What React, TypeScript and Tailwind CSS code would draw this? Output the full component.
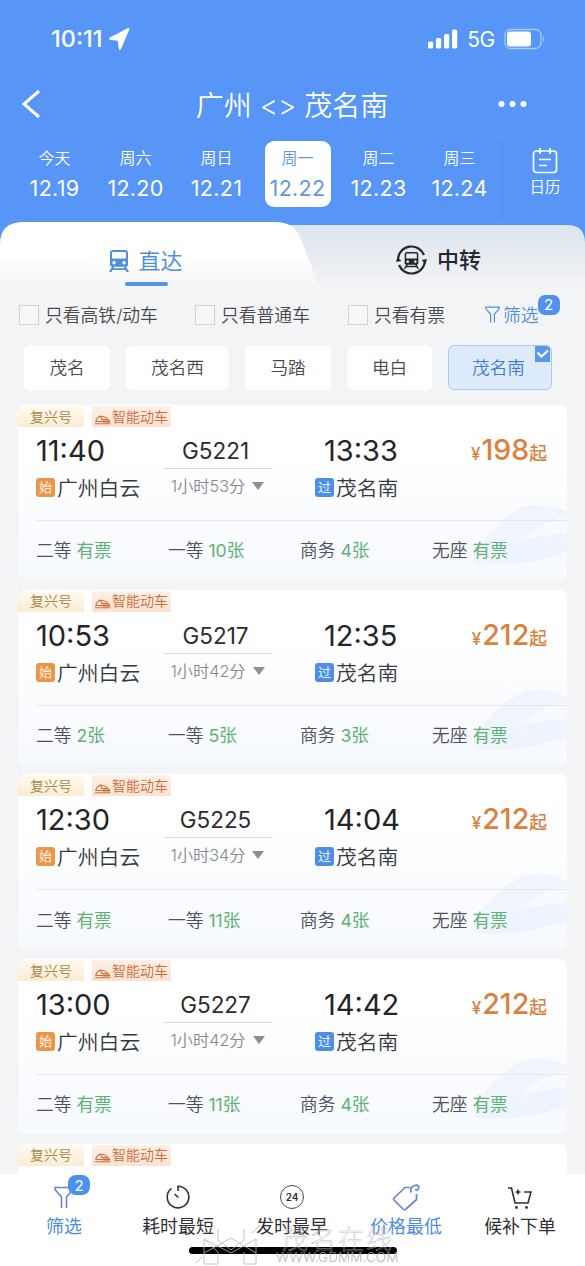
import { ReactNode } from 'react';

const days = [
  { week: '今天', date: '12.19' },
  { week: '周六', date: '12.20' },
  { week: '周日', date: '12.21' },
  { week: '周一', date: '12.22', active: true },
  { week: '周二', date: '12.23' },
  { week: '周三', date: '12.24' },
];

const stations = [
  { name: '茂名', width: 'w-[86px]' },
  { name: '茂名西', width: 'w-[103px]' },
  { name: '马踏', width: 'w-[86px]' },
  { name: '电白', width: 'w-[85px]' },
];

const trains = [
  { no: 'G5221', from: '11:40', to: '13:33', duration: '1小时53分', price: 198, seats: ['有票', '10张', '4张', '有票'] },
  { no: 'G5217', from: '10:53', to: '12:35', duration: '1小时42分', price: 212, seats: ['2张', '5张', '3张', '有票'] },
  { no: 'G5225', from: '12:30', to: '14:04', duration: '1小时34分', price: 212, seats: ['有票', '11张', '4张', '有票'] },
  { no: 'G5227', from: '13:00', to: '14:42', duration: '1小时42分', price: 212, seats: ['有票', '11张', '4张', '有票'] },
];

const seatNames = ['二等', '一等', '商务', '无座'];

function StatusBar() {
  return (
    <div className="flex h-[78px] items-center pl-[51px] pr-[40px] text-white">
      <span className="text-[23.500px] font-medium leading-none">10:11</span>
      <svg className="ml-[6px]" width="21" height="22" viewBox="0 0 21 22" fill="currentColor">
        <path d="M20.300 1.500 12 21c-.5 1.200-2 1-2.200-.3L8.800 12.800.900 11.800C-.200 11.500-.200 10 .800 9.500L18.500.200c1.300-.6 2.300.1 1.800 1.300Z" />
      </svg>
      <svg className="ml-auto" width="30" height="20" viewBox="0 0 30 20" fill="currentColor">
        <rect x="0" y="12.500" width="5.200" height="7" rx="1.500" />
        <rect x="8" y="9" width="5.200" height="10.500" rx="1.500" />
        <rect x="16" y="5" width="5.200" height="14.500" rx="1.500" />
        <rect x="24" y="0.500" width="5.200" height="19" rx="1.500" />
      </svg>
      <span className="ml-[9px] text-[21px] leading-none tracking-[-0.3px]">5G</span>
      <svg className="ml-[9px]" width="41" height="22" viewBox="0 0 41 22">
        <rect x="1" y="1.500" width="36" height="19" rx="5.500" fill="none" stroke="#a9c9fa" strokeWidth="1.300" />
        <rect x="3" y="3.500" width="24" height="15" rx="3" fill="#fff" />
        <path d="M38.800 8v6c2-.8 2-5.200 0-6Z" fill="#a9c9fa" />
      </svg>
    </div>
  );
}

function TitleBar() {
  return (
    <div className="grid h-[52px] grid-cols-[100px_1fr_100px] items-center text-white">
      <svg className="ml-[21px]" width="20" height="30" viewBox="0 0 20 30" fill="none" stroke="currentColor" strokeWidth="3">
        <path d="M18 2 3 15 18 28" />
      </svg>
      <h1 className="mt-[3px] whitespace-nowrap pr-[1px] text-center text-[28px] font-[350] leading-none">广州 &lt;&gt; 茂名南</h1>
      <svg className="ml-[12px]" width="32" height="8" viewBox="0 0 32 8" fill="currentColor">
        <circle cx="4.500" cy="4" r="3" />
        <circle cx="15.500" cy="4" r="3" />
        <circle cx="26.500" cy="4" r="3" />
      </svg>
    </div>
  );
}

function DateStrip() {
  return (
    <div className="flex h-[92px] pl-[14px] pt-[11px] text-white">
      {days.map((d) => (
        <div key={d.date} className="flex w-[81px] justify-center">
          <div
            className={`flex h-[66px] w-[66px] flex-col items-center rounded-[9px] ${
              d.active ? 'bg-white text-[#5f97dd]' : ''
            }`}
          >
            <span className="mt-[7px] text-[16px] font-[350] leading-[20px]">{d.week}</span>
            <span className="mt-[9px] text-[21.500px] leading-[22px] tracking-[0.3px]">{d.date}</span>
          </div>
        </div>
      ))}
      <div className="flex h-[77px] flex-1 flex-col items-center bg-[linear-gradient(90deg,#5792ee,#5795f7_8px)] pl-[5px]">
        <svg className="mt-[7px]" width="26" height="26" viewBox="0 0 26 26" fill="none" stroke="currentColor" strokeWidth="1.700">
          <rect x="1.500" y="3" width="23" height="21.500" rx="3" />
          <path d="M8 0v6M18 0v6M7 11.500h12M7 17.500h8" />
        </svg>
        <span className="mt-[4px] text-[15.500px] font-[350] leading-[20px]">日历</span>
      </div>
    </div>
  );
}

function TrainFront() {
  return (
    <path
      fillRule="evenodd"
      d="M4 0h12q3 0 3 3v12q0 1.500-1.500 1.500h-.6L20 22h-2.500l-.9-2H3.400l-.9 2H0l3.100-5.500h-.6Q1 16.500 1 15V3q0-3 3-3Zm.3 2Q3 2 3 3.300V8.500h14V3.300Q17 2 15.700 2ZM5 11a1.700 1.700 0 1 0 .1 0Zm10 0a1.700 1.700 0 1 0 .1 0ZM5.200 16.700l-.8 1.500h11.200l-.8-1.500Z"
    />
  );
}

function Tabs() {
  return (
    <div className="relative z-0 flex h-[66px]">
      <svg className="absolute inset-0 -z-10" width="585" height="66" viewBox="0 0 585 66">
        <defs>
          <linearGradient id="tabOn" x1="0" y1="0" x2="0" y2="1">
            <stop offset="0.550" stopColor="#fff" />
            <stop offset="1" stopColor="#f4f4f5" />
          </linearGradient>
          <linearGradient id="tabOff" x1="0" y1="0" x2="0" y2="1">
            <stop offset="0" stopColor="#dce5ee" />
            <stop offset="1" stopColor="#f3f3f5" />
          </linearGradient>
        </defs>
        <path d="M250 3h317q18 0 18 18v45H250Z" fill="url(#tabOff)" />
        <path d="M0 66V22Q0 0 24 0H275q19 0 25 15l20 51Z" fill="url(#tabOn)" />
      </svg>
      <div className="flex w-[292px] flex-col items-center">
        <div className="mt-[24px] flex items-center text-[#508fe0]">
          <svg width="20" height="22" viewBox="0 0 20 22" fill="currentColor">
            <TrainFront />
          </svg>
          <span className="ml-[9px] mt-px text-[22px] leading-[28px]">直达</span>
        </div>
        <div className="mt-[7px] h-[4px] w-[43px] rounded-full bg-[#5296e3]" />
      </div>
      <div className="flex flex-1 items-start justify-center pt-[23px] text-[#26282d]">
        <svg width="31" height="31" viewBox="0 0 31 31">
          <path d="M2 14A13.500 13.500 0 0 1 28 10M29 16A13.500 13.500 0 0 1 3 20" fill="none" stroke="currentColor" strokeWidth="2.200" />
          <path d="m0 17 1.500-5 4 4Zm31-3-1.500 5-4-4Z" fill="currentColor" />
          <g transform="translate(7.900 7) scale(.76)" fill="currentColor">
            <TrainFront />
          </g>
        </svg>
        <span className="ml-[10px] mt-px text-[22px] font-medium leading-[28px]">中转</span>
      </div>
    </div>
  );
}

function FunnelIcon({ className, size }: { className?: string; size: number }) {
  return (
    <svg className={className} width={size} height={size * 1.15} viewBox="0 0 20 23" fill="none" stroke="currentColor" strokeWidth="1.600">
      <path d="M7.500 22V11L1 3.500V1.500h18v2L12.500 11v11" />
    </svg>
  );
}

function CheckFilter({ label, className }: { label: string; className: string }) {
  return (
    <div className={`flex items-center ${className}`}>
      <span className="h-[20px] w-[20px] border border-[#d2d3d4] bg-[#f7f7f7]" />
      <span className="ml-[6px] mt-px whitespace-nowrap text-[17.800px] font-[350] leading-none">{label}</span>
    </div>
  );
}

function Filters() {
  return (
    <div className="flex h-[54px] items-center pl-[19px] text-[#48494b]">
      <CheckFilter label="只看高铁/动车" className="w-[176px]" />
      <CheckFilter label="只看普通车" className="w-[153px]" />
      <CheckFilter label="只看有票" className="w-[137px]" />
      <div className="relative flex items-center text-[#538edb]">
        <FunnelIcon size={15} />
        <span className="ml-[3px] mt-px text-[17.800px] font-[350] leading-none">筛选</span>
        <span className="absolute -right-[21px] -top-[11px] flex h-[20px] w-[22px] items-center justify-center rounded-[7px] bg-[#4f92ed] text-[15px] leading-none text-white">
          2
        </span>
      </div>
    </div>
  );
}

function Stations() {
  return (
    <div className="flex h-[63px] gap-[16px] pl-[24px] pt-[4px] text-[17.600px] font-[350] text-[#48494b]">
      {stations.map((s) => (
        <div key={s.name} className={`flex h-[44px] items-center justify-center rounded-[5px] bg-white pt-px ${s.width}`}>
          {s.name}
        </div>
      ))}
      <div className="relative -mt-px flex h-[45px] w-[104px] items-center justify-center overflow-hidden rounded-[6px] border border-[#aacbf3] bg-[#deebfc] pr-[3px] pt-[2px] text-[#3f7dd0]">
        茂名南
        <span className="absolute right-px top-0 flex h-[16px] w-[15px] items-center justify-center bg-[#5d98e8]">
          <svg width="13" height="10" viewBox="0 0 13 10" fill="none" stroke="#fff" strokeWidth="2">
            <path d="m1.500 3.500 4 4L12 1.500" />
          </svg>
        </span>
      </div>
    </div>
  );
}

function CardTags() {
  return (
    <div className="flex h-[22px] items-end gap-[8px] text-[14px] font-[350] leading-none">
      <span className="flex h-[21px] w-[66px] items-center justify-center rounded-tl-[8px] bg-[linear-gradient(180deg,#fffaf1,#faecd1)] text-[#a58548]">
        复兴号
      </span>
      <span className="flex h-[21px] w-[79px] items-center justify-center bg-[linear-gradient(180deg,#fdf0e9,#fbe2d2)] text-[#cb6c36]">
        <svg className="mt-[6px]" width="16" height="10" viewBox="0 0 16 10" fill="none" stroke="currentColor" strokeWidth="1.100">
          <path d="M5.500 1C3 2 1 4.500 .8 6.500H8M5.500 1c3 .2 6.500 2 9 5M5.500 1l1.300 3.500h5M0 8.800h15.500" />
          <path d="M8 6.500h7" strokeWidth="2" />
        </svg>
        <span className="ml-px">智能动车</span>
      </span>
    </div>
  );
}

function StationTag({ children, className }: { children: ReactNode; className: string }) {
  return (
    <span className={`-mt-[3px] mr-[2px] flex h-[19px] w-[19px] items-center justify-center rounded-[3px] text-[13px] leading-none text-white ${className}`}>
      {children}
    </span>
  );
}

function TrainCard({ train }: { train: (typeof trains)[number] }) {
  return (
    <div className="relative z-0 h-[175px] shrink-0 overflow-hidden rounded-[8px] bg-[linear-gradient(180deg,#fff_25%,#f6f9fe)]">
      {/* Bullet train watermark */}
      <svg className="absolute bottom-[13px] right-0 -z-10" width="93" height="64" viewBox="0 0 93 64">
        <path d="M0 50C18 25 34 9 52 3q20-4 41 6v39C68 58 35 64 2 61Z" fill="#eff4fd" />
        <path d="M48 36c10-10 24-18 45-22v17q-22 2-45 5Z" fill="#f7faff" />
        <path d="M12 61C40 44 62 32 93 31v17C68 58 42 63 12 61Z" fill="#edf4fd" />
      </svg>
      <CardTags />
      <div className="grid h-[93px] grid-cols-[140px_119px_144px_1fr] pl-[18px]">
        <div>
          <div className="mt-[6px] text-[29px] leading-[36px] text-[#242528]">{train.from}</div>
          <div className="mt-[5px] flex items-center whitespace-nowrap text-[20.800px] font-[350] leading-[30px] text-[#36383b]">
            <StationTag className="bg-[#eb9545]">始</StationTag>
            广州白云
          </div>
        </div>
        <div className="-ml-[12px] mt-[9px] flex w-[108px] flex-col items-center">
          <div className="h-[32px] pr-[5px] text-[22.500px] leading-[29px] text-[#2b2c2f]">{train.no}</div>
          <div className="h-px w-full bg-[#d8d9dd]" />
          <div className="flex h-[34px] items-center whitespace-nowrap pr-px text-[16.200px] font-[350] leading-none text-[#85878c]">
            {train.duration}
            <svg className="ml-[7px]" width="12" height="8" viewBox="0 0 12 8">
              <path d="M0 0h12L6 8Z" fill="#8b8e93" />
            </svg>
          </div>
        </div>
        <div className="pl-[20px]">
          <div className="ml-[9px] mt-[6px] text-[29px] leading-[36px] text-[#242528]">{train.to}</div>
          <div className="mt-[5px] flex items-center whitespace-nowrap text-[20.800px] font-[350] leading-[30px] text-[#36383b]">
            <StationTag className="bg-[#4d8fe8]">过</StationTag>
            茂名南
          </div>
        </div>
        <div className="mt-[5px] flex h-[34px] items-baseline justify-end pr-[20px] text-[17.800px] font-medium leading-[36px] text-[#da8140]">
          <span className="text-[17px]">¥</span>
          <span className="ml-px text-[28.500px]">{train.price}</span>
          <span>起</span>
        </div>
      </div>
      <div className="ml-[18px] h-px bg-[#e5e9ef]" />
      <div className="flex h-[59px] items-center pl-[18px] pt-px text-[17.700px] font-[350] leading-none text-[#4c5060]">
        {seatNames.map((name, i) => (
          <div key={name} className="w-[132px] shrink-0 whitespace-nowrap">
            {name} <span className="font-normal text-[#5db373]">{train.seats[i]}</span>
          </div>
        ))}
      </div>
    </div>
  );
}

function SortItem({ icon, label, active }: { icon: ReactNode; label: string; active?: boolean }) {
  return (
    <div className={`flex w-[114px] shrink-0 flex-col items-center ${active ? 'text-[#4f8ddb]' : 'text-[#303133]'}`}>
      <div className="relative mt-[8px] flex h-[30px] items-center justify-center">{icon}</div>
      <span className="mt-px whitespace-nowrap text-[17.900px] leading-[28px]">{label}</span>
    </div>
  );
}

function BottomBar() {
  return (
    <div className="relative flex h-[92px] bg-white pl-[7px]">
      <SortItem
        active
        label="筛选"
        icon={
          <>
            <FunnelIcon className="text-[#6a82cf]" size={20} />
            <span className="absolute -right-[16px] -top-[7px] flex h-[20px] w-[22px] items-center justify-center rounded-[8px] bg-[#4d91ee] text-[15px] leading-none text-white">
              2
            </span>
          </>
        }
      />
      <SortItem
        label="耗时最短"
        icon={
          <svg width="24" height="24" viewBox="0 0 24 24" fill="none" stroke="currentColor" strokeWidth="1.600">
            <path d="M12 6V1.200A10.800 10.800 0 1 1 5.500 3.400M8.500 9l4 3.500" />
          </svg>
        }
      />
      <SortItem
        label="发时最早"
        icon={
          <span className="flex h-[24px] w-[24px] items-center justify-center rounded-full border-[1.500px] border-[#4b4c4e] text-[10px] font-semibold leading-none">
            24
          </span>
        }
      />
      <SortItem
        active
        label="价格最低"
        icon={
          <svg width="28" height="28" viewBox="0 0 28 28" fill="none" stroke="#6787cb" strokeWidth="1.700" strokeLinejoin="round">
            <path d="M18 4.500H13L2 15q-1 1 0 2l9 9q1.500 1.500 3 0l10.500-9.500V11" />
            <path d="M19.500 9.500c-2-3 0-6 3-7 3-1 5 0 4 3-.7 2-2.500 2-3.500 1" />
          </svg>
        }
      />
      <SortItem
        label="候补下单"
        icon={
          <svg className="mt-[2px]" width="24" height="24" viewBox="0 0 24 24" fill="none" stroke="currentColor" strokeWidth="1.600">
            <path d="M0 2h3.500L7 17h13l3-11h-7M7.500 6h5M10 3.500v5" />
            <circle cx="8.500" cy="21.500" r="1.400" fill="currentColor" stroke="none" />
            <circle cx="18.500" cy="21.500" r="1.400" fill="currentColor" stroke="none" />
          </svg>
        }
      />
      <div className="absolute left-[189px] top-[73px] h-[7px] w-[208px] rounded-full bg-black" />
      {/* Site mark laid over the bar */}
      <div className="absolute left-[194px] top-[51px] flex text-[#b9b9bb] opacity-80">
        <svg width="70" height="41" viewBox="0 0 70 41" fill="none" stroke="currentColor" strokeWidth="1">
          <path d="M10 14v25h14V27L10 14l27 14 25-14v25H50V27M24 4v11l13 10 13-10V4M10 28l27-15 25 15M2 38l6-6M58 8l8-8" />
        </svg>
        <div className="ml-[18px] flex flex-col">
          <span className="h-[23px] whitespace-nowrap text-[26px] font-light leading-[30px] tracking-[2px] text-transparent [-webkit-text-stroke:0.500px_#b5b6b8]">
            茂名在线
          </span>
          <span className="-ml-[6px] mt-[3px] text-[13.500px] font-light leading-[13px] tracking-[0.100px] text-[#a5a5a7]">WWW.GDMM.COM</span>
        </div>
      </div>
    </div>
  );
}

export default function App() {
  return (
    <div className="flex h-[1266px] w-[585px] flex-col overflow-hidden bg-[#f3f4f5] font-['Inter','Noto_Sans_CJK_SC',sans-serif]">
      <div className="bg-[#5795f7]">
        <StatusBar />
        <TitleBar />
        <DateStrip />
        <Tabs />
      </div>
      <Filters />
      <Stations />
      <div className="flex min-h-0 flex-1 flex-col gap-[9.700px] overflow-hidden px-[18px]">
        {trains.map((t) => (
          <TrainCard key={t.no} train={t} />
        ))}
        <div className="h-[40px] shrink-0 rounded-t-[8px] bg-white">
          <CardTags />
        </div>
      </div>
      <BottomBar />
    </div>
  );
}
